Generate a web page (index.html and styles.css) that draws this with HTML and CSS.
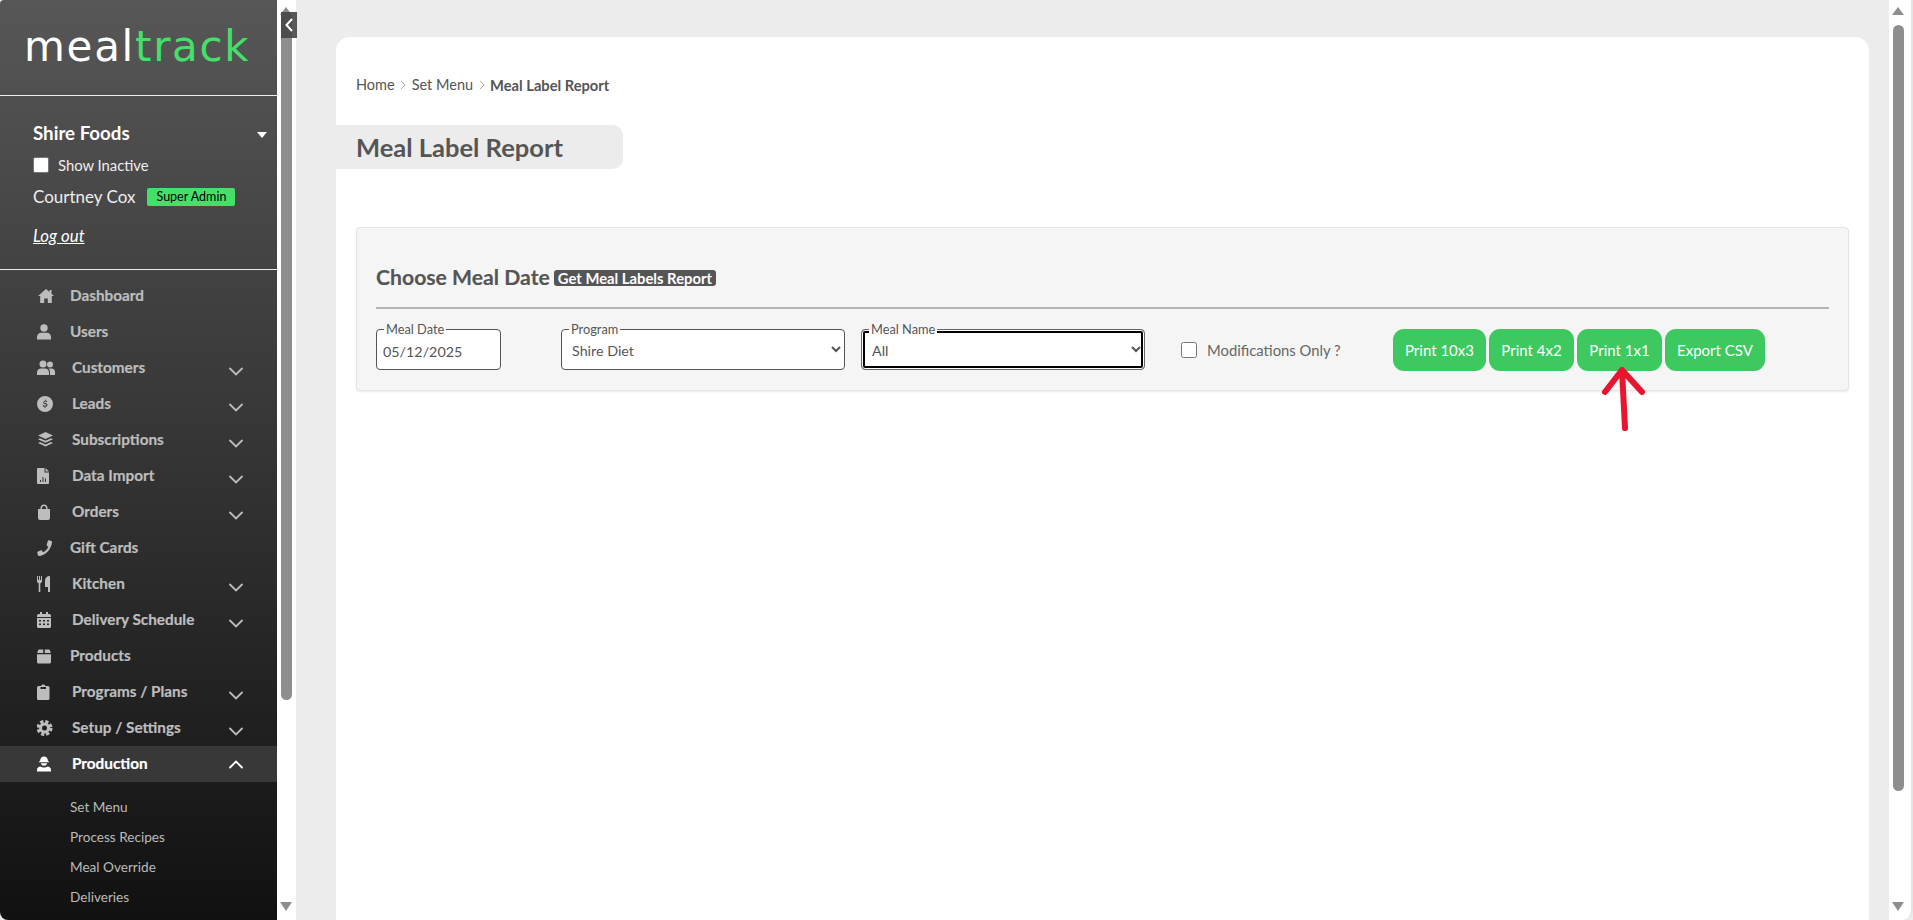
FILE: index.html
```html
<!DOCTYPE html>
<html lang="en">
<head>
<meta charset="utf-8">
<title>Meal Label Report</title>
<link rel="stylesheet" href="styles.css">
</head>
<body>
<svg class="sprite" width="0" height="0" aria-hidden="true">
  <symbol id="chev-down" viewBox="0 0 14 9"><path d="M1 1.500 7 7.500 13 1.500" fill="none" stroke="currentColor" stroke-width="1.800" stroke-linecap="round"/></symbol>
  <symbol id="chev-up" viewBox="0 0 14 9"><path d="M1 7.500 7 1.500 13 7.500" fill="none" stroke="currentColor" stroke-width="1.800" stroke-linecap="round"/></symbol>
</svg>
<aside class="sidebar">
  <div class="logo"><span class="logo-a">meal</span><span class="logo-b">track</span></div>
  <div class="account">
    <div class="org"><span>Shire Foods</span><i class="caret"></i></div>
    <label class="inactive"><span class="fake-check"></span>Show Inactive</label>
    <div class="who"><span>Courtney Cox</span><span class="role">Super Admin</span></div>
    <a class="logout">Log out</a>
  </div>
  <nav class="nav">
    <a class="item"><svg class="ico" viewBox="0 0 18 16"><path d="M9 1 1 8h2.200v7h4v-4.500h3.600V15h4V8H17l-2.500-2.200V2h-2v2L9 1z"/></svg><span class="lbl">Dashboard</span></a>
    <a class="item"><svg class="ico" viewBox="0 0 18 16"><circle cx="7" cy="4" r="3.700"/><path d="M0 15.500v-2.500C0 10.500 2 8.800 4 8.800h6c2 0 4 1.700 4 4.200v2.500z"/></svg><span class="lbl">Users</span></a>
    <a class="item sub"><svg class="ico" viewBox="0 0 18 16"><circle cx="6" cy="4" r="3.500"/><circle cx="13" cy="4.500" r="3"/><path d="M0 15v-2.500C0 10 2 8.500 4 8.500h4c2 0 4 1.500 4 4V15zM13 15v-2.800c0-1.500-.6-2.700-1.500-3.700h3c2 0 3.500 1.500 3.500 3.500v3z"/></svg><span class="lbl">Customers</span><svg class="chev"><use href="#chev-down"/></svg></a>
    <a class="item sub"><svg class="ico" viewBox="0 0 18 16"><path fill-rule="evenodd" d="M8 0a8 8 0 1 0 0 16A8 8 0 0 0 8 0zm.5 3.500v1c.8.100 1.400.4 1.800.8l-.7.800c-.4-.3-.9-.6-1.500-.6-.7 0-1.100.3-1.100.7 0 .5.500.7 1.300.9 1.100.3 2.100.7 2.100 1.900 0 1-.7 1.600-1.900 1.800v1h-1v-1c-.9-.1-1.600-.5-2-1l.7-.8c.5.500 1.100.8 1.800.8.800 0 1.300-.3 1.300-.8s-.5-.8-1.400-1C7.200 8.200 6.200 7.800 6.200 6.600c0-1 .7-1.700 1.800-1.900v-1.200z"/></svg><span class="lbl">Leads</span><svg class="chev"><use href="#chev-down"/></svg></a>
    <a class="item sub"><svg class="ico" viewBox="0 0 18 16"><path d="M8.500 0 16 3.500 8.500 7 1 3.500zM3 6.300l5.500 2.500L14 6.300l2 1-7.500 3.500L1 7.300zM3 10l5.500 2.500L14 10l2 1-7.500 3.500L1 11z"/></svg><span class="lbl">Subscriptions</span><svg class="chev"><use href="#chev-down"/></svg></a>
    <a class="item sub"><svg class="ico" viewBox="0 0 18 16"><path fill-rule="evenodd" d="M1 0h6.500v4.500H12V15a1 1 0 0 1-1 1H1a1 1 0 0 1-1-1V1a1 1 0 0 1 1-1zm7.500 0L12 3.500H8.500zM3 12v2h1v-2zm2.500-3v5h1V9zM8 10.500V14h1v-3.500z"/></svg><span class="lbl">Data Import</span><svg class="chev"><use href="#chev-down"/></svg></a>
    <a class="item sub"><svg class="ico" viewBox="0 0 18 16"><path fill-rule="evenodd" d="M3.500 5V4a3.500 3.500 0 0 1 7 0v1H13v9a2 2 0 0 1-2 2H3a2 2 0 0 1-2-2V5zM5 5h4V4a2 2 0 0 0-4 0z"/></svg><span class="lbl">Orders</span><svg class="chev"><use href="#chev-down"/></svg></a>
    <a class="item"><svg class="ico" viewBox="0 0 18 16"><path d="M11.500.2 14.600 1c.3.100.5.400.4.700C14.600 9.800 8 15.800 1.700 16c-.3 0-.6-.2-.7-.5L.3 12.400c-.1-.3.100-.6.300-.7l3.300-1.400c.3-.1.600 0 .8.200l1.500 1.800c2.300-1.100 4.100-3 5.100-5.200L9.900 5.600c-.2-.2-.3-.5-.2-.8L11 .6c.1-.3.300-.4.500-.4z"/></svg><span class="lbl">Gift Cards</span></a>
    <a class="item sub"><svg class="ico" viewBox="0 0 18 16"><path d="M0 0h1v4h1V0h1v4h1V0h1v5c0 1.200-.7 2-1.700 2.300V16H1.700V7.300C.7 7 0 6.200 0 5zM13 0v16h-2v-5H8V4.500C8 2 10 0 13 0z"/></svg><span class="lbl">Kitchen</span><svg class="chev"><use href="#chev-down"/></svg></a>
    <a class="item sub"><svg class="ico" viewBox="0 0 18 16"><path fill-rule="evenodd" d="M3 0h2v2h4V0h2v2h1.500A1.500 1.500 0 0 1 14 3.500V5H0V3.500A1.500 1.500 0 0 1 1.500 2H3zM0 6h14v8.500a1.500 1.500 0 0 1-1.500 1.500h-11A1.500 1.500 0 0 1 0 14.500zm2 2v1.500h2V8zm4 0v1.500h2V8zm4 0v1.500h2V8zm-8 3.500V13h2v-1.500zm4 0V13h2v-1.500zm4 0V13h2v-1.500z"/></svg><span class="lbl">Delivery Schedule</span><svg class="chev"><use href="#chev-down"/></svg></a>
    <a class="item"><svg class="ico" viewBox="0 0 18 16"><path d="M2 1.500h4.200V5H.2L1 2.500c.2-.6.500-1 1-1zM7.800 1.500H12c.5 0 .8.400 1 1l.8 2.500H7.800zM0 6.300h14V14a1.500 1.500 0 0 1-1.500 1.500h-11A1.500 1.500 0 0 1 0 14z"/></svg><span class="lbl">Products</span></a>
    <a class="item sub"><svg class="ico" viewBox="0 0 18 16"><path fill-rule="evenodd" d="M1.500 2H4a2.500 2.500 0 0 1 4.500 0H11a1.500 1.500 0 0 1 1.500 1.500v11A1.500 1.500 0 0 1 11 16H1.500A1.500 1.500 0 0 1 0 14.500v-11A1.500 1.500 0 0 1 1.500 2zm2 1v2h5.500V3z"/></svg><span class="lbl">Programs / Plans</span><svg class="chev"><use href="#chev-down"/></svg></a>
    <a class="item sub"><svg class="ico" viewBox="0 0 18 16"><circle class="gear-teeth" cx="7.500" cy="8" r="6.300"/><path fill-rule="evenodd" d="M7.500 2.500a5.500 5.500 0 1 0 0 11 5.500 5.500 0 0 0 0-11zm0 3a2.500 2.500 0 1 1 0 5 2.500 2.500 0 0 1 0-5z"/></svg><span class="lbl">Setup / Settings</span><svg class="chev"><use href="#chev-down"/></svg></a>
    <a class="item sub active"><svg class="ico" viewBox="0 0 18 16"><path d="M3 5.200C3 2.500 4.800.5 7 .5s4 2 4 4.700h1v1.100H2V5.200zM3.800 7.300h6.400A3.300 3.300 0 0 1 7 9.800a3.300 3.300 0 0 1-3.200-2.500zM0 15.500v-1.800c0-1.900 1.600-3.200 3.500-3.200.9.600 2.200 1 3.500 1s2.600-.4 3.500-1c1.900 0 3.500 1.300 3.500 3.200v1.800z"/></svg><span class="lbl">Production</span><svg class="chev"><use href="#chev-up"/></svg></a>
    <div class="submenu">
      <a>Set Menu</a>
      <a>Process Recipes</a>
      <a>Meal Override</a>
      <a>Deliveries</a>
    </div>
  </nav>
</aside>
<div class="bar side-bar">
  <i class="arrow up"></i><i class="thumb"></i><i class="arrow down"></i>
</div>
<button class="collapse" aria-label="Collapse"><svg viewBox="0 0 8 14" width="8" height="14"><path d="M7 1 1.500 7 7 13" fill="none" stroke="#fff" stroke-width="2"/></svg></button>
<main class="main">
  <section class="card">
    <div class="crumbs"><a>Home</a><svg class="sep" viewBox="0 0 6 10"><path d="M1 1l4 4-4 4" fill="none" stroke="#aaa"/></svg><a>Set Menu</a><svg class="sep" viewBox="0 0 6 10"><path d="M1 1l4 4-4 4" fill="none" stroke="#aaa"/></svg><b>Meal Label Report</b></div>
    <h1 class="title">Meal Label Report</h1>
    <div class="panel">
      <div class="panel-head"><h2>Choose Meal Date</h2><span class="tag">Get Meal Labels Report</span></div>
      <div class="controls">
        <div class="field date"><label>Meal Date</label><input type="text" value="05/12/2025"></div>
        <div class="field prog"><label>Program</label><select><option>Shire Diet</option></select></div>
        <div class="field meal"><label>Meal Name</label><select class="focus"><option>All</option></select></div>
        <label class="mods"><input type="checkbox">Modifications Only ?</label>
        <div class="btns">
          <button class="w93">Print 10x3</button>
          <button class="w85">Print 4x2</button>
          <button class="w85">Print 1x1</button>
          <button class="w100">Export CSV</button>
        </div>
      </div>
    </div>
  </section>
</main>
<div class="bar page-bar">
  <i class="arrow up"></i><i class="thumb"></i><i class="arrow down"></i>
</div>
<svg class="annot" viewBox="0 0 60 70" width="60" height="70"><path d="M28 3 31 61M28 3 11 25M28 3 48 25" fill="none" stroke="#e8152f" stroke-width="6" stroke-linecap="round" stroke-linejoin="round"/></svg>
</body>
</html>
```
FILE: styles.css
```css
* { box-sizing: border-box; }
html, body { margin: 0; height: 920px; overflow: hidden; }
body { display: flex; font-family: "Lato", "Liberation Sans", sans-serif; color: #555; background: #ececec; position: relative; }
.sprite { position: absolute; }
a { color: inherit; text-decoration: none; }

.sidebar { width: 277px; height: 920px; flex: none; overflow: hidden; color: #fff; background: linear-gradient(180deg, #575757 0%, #111 100%); border-radius: 4px 0 0 8px; }
.logo { height: 96px; border-bottom: 1px solid #eee; padding: 23px 0 0 24px; font-family: "DejaVu Sans", sans-serif; font-size: 42px; line-height: 48px; letter-spacing: 1.700px; font-weight: 400; white-space: nowrap; }
.logo-a { color: #fff; }
.logo-b { color: #44e06a; }
.account { height: 174px; border-bottom: 1px solid #eee; padding: 25px 10px 0 33px; }
.org { display: flex; align-items: center; justify-content: space-between; font-size: 18.700px; font-weight: 700; line-height: 24px; }
.caret { width: 0; height: 0; margin-top: 3px; border: 5px solid transparent; border-top: 6px solid #fff; border-bottom: 0; }
.inactive { display: flex; align-items: center; gap: 9px; margin-top: 10px; font-size: 14.800px; line-height: 20px; color: #eee; }
.fake-check { width: 16px; height: 16px; background: #fff; border-radius: 2px; border: 1px solid #777; }
.who { display: flex; align-items: center; gap: 12px; margin-top: 12px; font-size: 17px; line-height: 20px; color: #eee; }
.role { width: 88px; height: 18px; background: #44e06a; color: #000; font-size: 12.500px; line-height: 18px; text-align: center; border-radius: 2px; }
.logout { display: block; margin-top: 19px; font-size: 16.800px; line-height: 20px; font-style: italic; text-decoration: underline; color: #fff; }

.nav { padding-top: 8px; }
.item { display: flex; align-items: center; height: 36px; padding-left: 37px; font-size: 15.300px; font-weight: 700; color: #bdbdbd; position: relative; -webkit-text-stroke: .2px currentColor; }
.ico { width: 18px; height: 16px; fill: #bdbdbd; flex: none; margin-right: 15px; }
.item.sub .ico { margin-right: 17px; }
.gear-teeth { fill: none; stroke: #bdbdbd; stroke-width: 3.400px; stroke-dasharray: 3.100 1.850; }
.lbl { flex: 1; margin-top: -2px; }
.chev { width: 14px; height: 9px; margin: 6px 34px 0 0; color: #bdbdbd; flex: none; }
.active { background: #383838; color: #fff; }
.active .ico { fill: #fff; }
.active .chev { color: #fff; margin-top: 0; }
.submenu { display: flex; flex-direction: column; padding: 10px 0 0 70px; }
.submenu a { height: 30px; line-height: 30px; font-size: 13.600px; color: #bbb; }

.bar { flex: none; position: relative; background: #fff; }
.side-bar { width: 19px; height: 920px; }
.page-bar { width: 24px; height: 920px; border-right: 2px solid #e4e4e4; border-radius: 0 0 10px 0; }
.thumb { position: absolute; background: #8e8e8e; border-radius: 6px; left: 4px; width: 11px; }
.side-bar .thumb { top: 12px; height: 688px; }
.page-bar .thumb { top: 25px; height: 766px; }
.arrow { position: absolute; left: 3px; width: 0; height: 0; border: 6.500px solid transparent; }
.arrow.up { top: 7px; border-bottom: 8px solid #8e8e8e; border-top: 0; }
.arrow.down { bottom: 9px; border-top: 9px solid #8e8e8e; border-bottom: 0; }
.collapse { position: absolute; left: 281px; top: 12px; width: 16px; height: 26px; padding: 0; border: 0; background: rgba(70,70,70,.9); display: flex; align-items: center; justify-content: center; }

.main { flex: 1; min-width: 0; padding: 37px 20px 0 40px; }
.card { height: 883px; background: #fff; border-radius: 14px 14px 0 0; padding-top: 39px; }
.crumbs { display: flex; align-items: center; height: 18px; padding-left: 20px; font-size: 14.500px; line-height: 18px; }
.crumbs b { font-weight: 700; font-size: 14.700px; }
.sep { width: 6px; height: 10px; margin: 0 5.500px; }
.title { margin: 31px 0 0; width: 287px; height: 44px; background: #ececec; border-radius: 0 10px 10px 0; padding-left: 20px; font-size: 25.500px; line-height: 44px; font-weight: 700; }
.panel { margin: 58px 20px 0; height: 164px; background: #f5f5f5; border: 1px solid #e4e4e4; border-radius: 4px; box-shadow: 0 1px 2px rgba(0,0,0,.08); padding: 30px 19px 0; }
.panel-head { display: flex; align-items: center; gap: 4px; height: 51px; border-bottom: 2px solid #b5b5b5; padding-bottom: 10px; }
.panel-head h2 { margin: 0; font-size: 21.200px; line-height: 39px; font-weight: 700; -webkit-text-stroke: .15px currentColor; }
.tag { background: #555; color: #fff; font-size: 14.800px; font-weight: 700; line-height: 16px; padding: 0 4px; border-radius: 3px; }
.controls { display: flex; align-items: flex-start; margin-top: 20px; }
.field { position: relative; height: 41px; }
.field label { position: absolute; left: 8px; top: -7px; padding: 0 2px 0 2px; font-size: 12.800px; line-height: 14px; color: #555; background: linear-gradient(180deg, #f5f5f5 0 50%, #fff 50% 100%); }
.field input, .field select { width: 100%; height: 41px; border: 1px solid #555; border-radius: 4px; background: #fff; color: #555; font-family: inherit; font-size: 14.300px; padding: 4px 6px 0; }
.field select { padding-top: 2px; }
.date { width: 125px; margin-right: 60px; }
.prog { width: 284px; margin-right: 16px; }
.meal { width: 284px; margin-right: 36px; }
.field select.focus { border: 1px solid #666; box-shadow: inset 0 0 0 1px #fff, inset 0 0 0 3px #000; padding-left: 6px; }
.mods { display: flex; align-items: center; gap: 10px; height: 41px; width: 212px; font-size: 14.800px; color: #666; }
.mods input { width: 16px; height: 16px; margin: 0; flex: none; }
.btns { display: flex; gap: 3px; }
.btns button { height: 42px; border: 0; border-radius: 11px; background: #3ec860; color: #fff; font-family: inherit; font-size: 15px; padding: 0; }
.w93 { width: 93px; }
.w85 { width: 85px; }
.w100 { width: 100px; }
.annot { position: absolute; left: 1594px; top: 367px; }
```
